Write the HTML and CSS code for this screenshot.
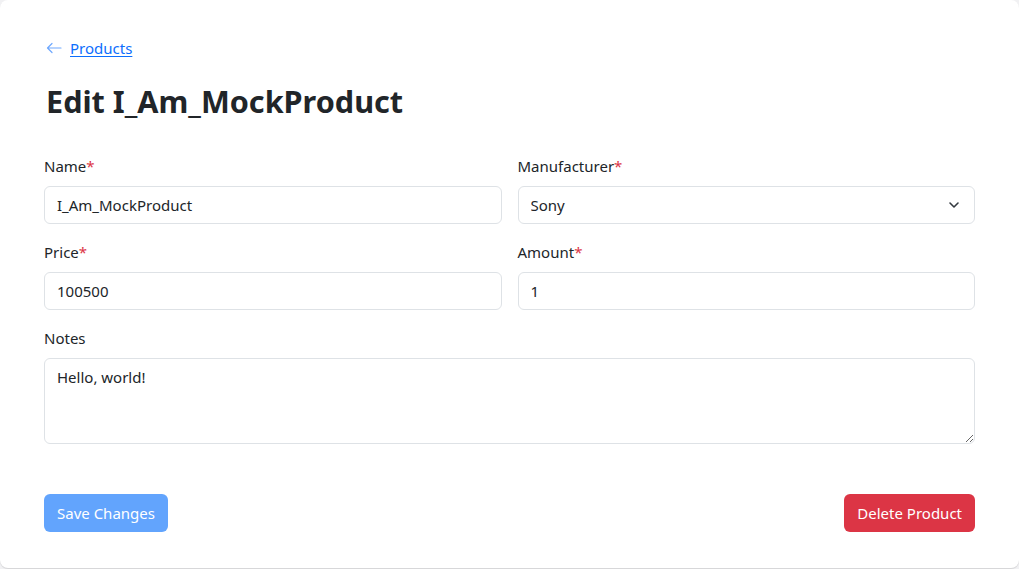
FILE: index.html
```html
<!DOCTYPE html>
<html>
<head>
<meta charset="utf-8">
<link rel="stylesheet" href="styles.css">
</head>
<body>
<main class="card">
  <a class="back" href="#"><svg class="arrow" width="16" height="16" viewBox="0 0 16 16"><path d="M15 8H1.5M6 3.5L1.5 8 6 12.5" fill="none" stroke="#6ea8fe" stroke-width="1.2" stroke-linecap="round" stroke-linejoin="round"/></svg><span class="back-text">Products</span></a>
  <h1 class="title">Edit I_Am_MockProduct</h1>
  <form class="form">
    <div class="grid">
      <div class="field">
        <label class="label">Name<span class="req">*</span></label>
        <input class="control" type="text" value="I_Am_MockProduct">
      </div>
      <div class="field">
        <label class="label">Manufacturer<span class="req">*</span></label>
        <div class="select-wrap">
          <select class="control select"><option>Sony</option></select>
          <svg class="chev" width="16" height="16" viewBox="0 0 16 16"><path d="M4 6l4 4 4-4" fill="none" stroke="#343a40" stroke-width="1.6" stroke-linecap="round" stroke-linejoin="round"/></svg>
        </div>
      </div>
      <div class="field">
        <label class="label">Price<span class="req">*</span></label>
        <input class="control" type="text" value="100500">
      </div>
      <div class="field">
        <label class="label">Amount<span class="req">*</span></label>
        <input class="control" type="text" value="1">
      </div>
      <div class="field full">
        <label class="label">Notes</label>
        <textarea class="control area">Hello, world!</textarea>
      </div>
    </div>
    <div class="actions">
      <button type="button" class="btn btn-save">Save Changes</button>
      <button type="button" class="btn btn-delete">Delete Product</button>
    </div>
  </form>
</main>
</body>
</html>
```
FILE: styles.css
```css
* { box-sizing: border-box; }
html, body { margin: 0; padding: 0; }
body {
  background: #f1f1f3;
  font-family: "Noto Sans", "Open Sans", sans-serif;
  color: #212529;
  font-size: 15px;
  height: 569px;
  overflow: hidden;
}
.card {
  background: #fff;
  border-radius: 8px;
  box-shadow: 0 1px 1px rgba(0,0,0,0.12);
  height: 568px;
  padding: 36px 44px 36px 44px;
}
.back {
  display: flex;
  align-items: center;
  gap: 8px;
  color: #0d6efd;
  height: 24px;
  line-height: 24px;
  text-decoration: none;
  width: max-content;
}
.arrow { margin-left: 2px; }
.back-text { text-decoration: underline; text-underline-offset: 2px; }
.title {
  font-size: 30.6px;
  font-weight: 700;
  margin: 23px 0 35px 2px;
  line-height: 36px;
}
.grid {
  display: grid;
  grid-template-columns: 1fr 1fr;
  column-gap: 16px;
  row-gap: 16px;
}
.field { display: flex; flex-direction: column; }
.full { grid-column: 1 / 3; }
.label { line-height: 24px; margin-bottom: 8px; }
.req { color: #dc3545; }
.control {
  font: inherit;
  color: #212529;
  height: 38px;
  border: 1px solid #dee2e6;
  border-radius: 6px;
  padding: 6px 12px;
  background: #fff;
  width: 100%;
  outline: none;
}
.select-wrap { position: relative; }
.select { appearance: none; -webkit-appearance: none; }
.chev { position: absolute; right: 13px; top: 11px; pointer-events: none; }
.area { height: 86px; resize: vertical; line-height: 24px; }
.actions {
  display: flex;
  justify-content: space-between;
  margin-top: 50px;
}
.btn {
  font: inherit;
  height: 38px;
  border: none;
  border-radius: 6px;
  color: #fff;
  padding: 0 13px;
}
.btn-save { background: #62a4fd; }
.btn-delete { background: #dc3545; }
```
